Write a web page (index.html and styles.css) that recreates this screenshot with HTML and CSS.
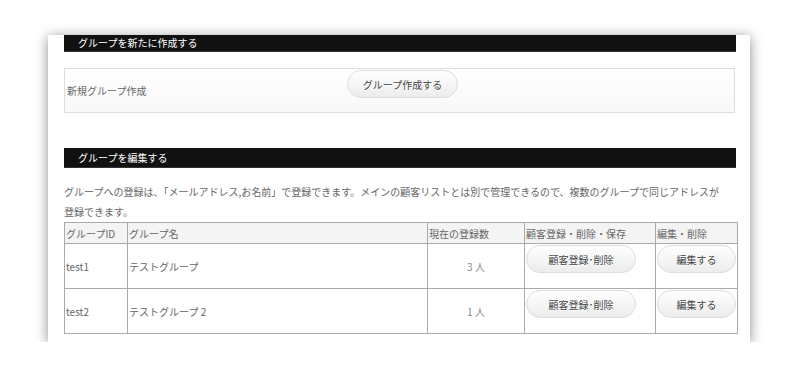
FILE: index.html
```html
<!DOCTYPE html>
<html lang="ja">
  <head>
    <meta charset="UTF-8" />
    <meta name="viewport" content="width=device-width, initial-scale=1.0" />
    <title>グループ管理</title>
    <link rel="stylesheet" href="styles.css">
  </head>
  <body>
    <div class="container">
      <h2 class="bar first">グループを新たに作成する</h2>
      <div class="create-box">
        <span class="create-label">新規グループ作成</span>
        <button class="btn create-btn">グループ作成する</button>
      </div>

      <h2 class="bar">グループを編集する</h2>
      <p class="note">
        グループへの登録は、「メールアドレス,お名前」で登録できます。メインの顧客リストとは別で管理できるので、複数のグループで同じアドレスが登録できます。
      </p>

      <table class="groups">
        <colgroup>
          <col class="c-id" />
          <col class="c-name" />
          <col class="c-count" />
          <col class="c-member" />
          <col class="c-edit" />
        </colgroup>
        <tr>
          <th>グループID</th>
          <th>グループ名</th>
          <th>現在の登録数</th>
          <th>顧客登録・削除・保存</th>
          <th>編集・削除</th>
        </tr>
        <tr>
          <td>test1</td>
          <td>テストグループ</td>
          <td class="count">3 人</td>
          <td class="action"><button class="btn member-btn">顧客登録･削除</button></td>
          <td class="action"><button class="btn edit-btn">編集する</button></td>
        </tr>
        <tr>
          <td>test2</td>
          <td>テストグループ 2</td>
          <td class="count">1 人</td>
          <td class="action"><button class="btn member-btn">顧客登録･削除</button></td>
          <td class="action"><button class="btn edit-btn">編集する</button></td>
        </tr>
      </table>
    </div>
  </body>
</html>
```

FILE: styles.css
```css
body {
  margin: 0;
  background: #fff;
  font-family: "Noto Sans CJK JP", "Noto Sans", sans-serif;
  font-size: 10px;
  color: #666;
}
.container {
  width: 672px;
  margin: 35px 0 0 48px;
  padding: 0 14px 8px 16px;
  background: #fff;
  box-shadow: 0 2px 12px rgba(0, 0, 0, 0.45);
}
.bar {
  margin: 0;
  height: 20px;
  line-height: 20px;
  padding-left: 14px;
  background: #111;
  border-bottom: 1px solid #333;
  box-sizing: border-box;
  color: #fff;
  font-size: 10px;
  font-weight: normal;
}
.bar.first {
  height: 17px;
  line-height: 15px;
}
.create-box {
  display: flex;
  align-items: center;
  height: 45px;
  margin: 16px 1px 35px 0;
  padding: 0 2px;
  border: 1px solid #ddd;
  box-sizing: border-box;
  background: linear-gradient(#fff, #f8f8f8);
}
.create-label {
  width: 280px;
}
.btn {
  height: 28px;
  padding: 0;
  border: 1px solid #ddd;
  border-radius: 14px;
  background: linear-gradient(#fff, #ececec);
  color: #444;
  font-family: inherit;
  font-size: 10px;
  text-shadow: 0 1px 0 #fff;
}
.create-btn {
  align-self: flex-start;
  width: 111px;
  margin-top: 1px;
}
.note {
  margin: 14px 0 0;
  padding-right: 8px;
  line-height: 20px;
}
.groups {
  width: 673px;
  border-collapse: collapse;
  table-layout: fixed;
}
.c-id { width: 63px; }
.c-name { width: 300px; }
.c-count { width: 97px; }
.c-member { width: 131px; }
.c-edit { width: 82px; }
.groups th,
.groups td {
  border: 1px solid #aaa;
  padding: 0 1px;
  text-align: left;
  font-weight: normal;
  white-space: nowrap;
  overflow: hidden;
}
.groups th {
  height: 20px;
  background: #f4f4f4;
}
.groups td {
  height: 43px;
}
.groups td.count {
  text-align: center;
  color: #888;
}
.groups td.action {
  vertical-align: top;
  padding-top: 1px;
}
.member-btn {
  width: 110px;
}
.edit-btn {
  width: 79px;
}
```
